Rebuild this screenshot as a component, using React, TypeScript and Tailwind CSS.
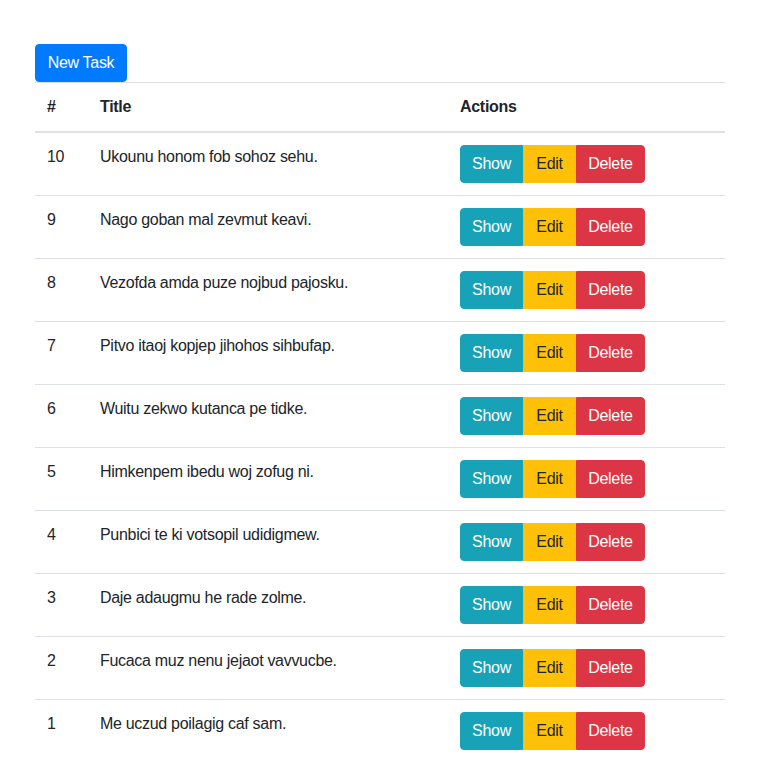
const tasks = [
  { id: 10, title: 'Ukounu honom fob sohoz sehu.' },
  { id: 9, title: 'Nago goban mal zevmut keavi.' },
  { id: 8, title: 'Vezofda amda puze nojbud pajosku.' },
  { id: 7, title: 'Pitvo itaoj kopjep jihohos sihbufap.' },
  { id: 6, title: 'Wuitu zekwo kutanca pe tidke.' },
  { id: 5, title: 'Himkenpem ibedu woj zofug ni.' },
  { id: 4, title: 'Punbici te ki votsopil udidigmew.' },
  { id: 3, title: 'Daje adaugmu he rade zolme.' },
  { id: 2, title: 'Fucaca muz nenu jejaot vavvucbe.' },
  { id: 1, title: 'Me uczud poilagig caf sam.' },
]

const App = () => {
  return (
    <div className="bg-white min-h-screen font-['Liberation_Sans',Arial,sans-serif] text-[16px] leading-6 tracking-[-0.3px] text-[#212529]">
      <div className="ml-[35px] w-[690px] pt-[44px]">
        <button className="w-[92px] bg-[#007bff] text-white text-center rounded py-[6px] border border-[#007bff] leading-6">
          New Task
        </button>
        <table className="w-full border-collapse text-left mb-4">
          <thead>
            <tr className="border-t border-[#dee2e6]">
              <th className="w-[53px] p-3 font-bold border-b-2 border-[#dee2e6] align-bottom">#</th>
              <th className="w-[360px] p-3 font-bold border-b-2 border-[#dee2e6] align-bottom">Title</th>
              <th className="p-3 font-bold border-b-2 border-[#dee2e6] align-bottom">Actions</th>
            </tr>
          </thead>
          <tbody>
            {tasks.map((t, i) => (
              <tr key={t.id} className={i > 0 ? 'border-t border-[#dee2e6]' : ''}>
                <td className="p-3 align-top">{t.id}</td>
                <td className="p-3 align-top">{t.title}</td>
                <td className="p-3 align-top">
                  <div className="inline-flex">
                    <button className="w-[63px] text-center bg-[#17a2b8] border border-[#17a2b8] text-white py-[6px] rounded-l">Show</button>
                    <button className="w-[53px] text-center bg-[#ffc107] border border-[#ffc107] text-[#212529] py-[6px]">Edit</button>
                    <button className="w-[69px] text-center bg-[#dc3545] border border-[#dc3545] text-white py-[6px] rounded-r">Delete</button>
                  </div>
                </td>
              </tr>
            ))}
          </tbody>
        </table>
      </div>
    </div>
  )
}

export default App
